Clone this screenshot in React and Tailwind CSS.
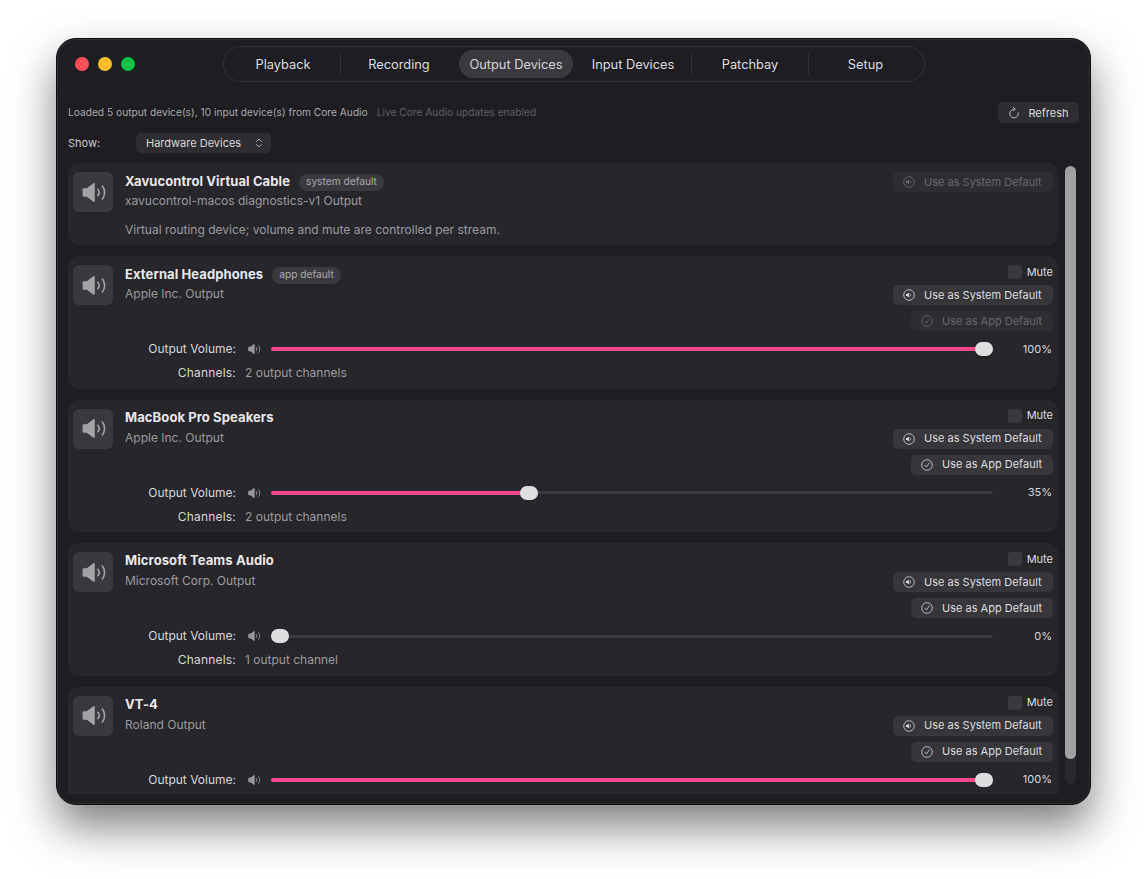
import { ChevronsUpDown } from 'lucide-react';

const TABS = [
  { label: 'Playback', width: 'w-[114px]' },
  { label: 'Recording', width: 'w-[116px]', sep: true },
  { label: 'Output Devices', width: 'w-[118px]', active: true },
  { label: 'Input Devices', width: 'w-[116px]' },
  { label: 'Patchbay', width: 'w-[116px]', sep: true },
  { label: 'Setup', width: 'w-[113px]', sep: true },
];

const DEVICES = [
  { name: 'External Headphones', badge: 'app default', sub: 'Apple Inc. Output', appDisabled: true, volume: 1, label: '100%', channels: '2 output channels' },
  { name: 'MacBook Pro Speakers', sub: 'Apple Inc. Output', volume: 0.3537, label: '35%', channels: '2 output channels' },
  { name: 'Microsoft Teams Audio', sub: 'Microsoft Corp. Output', volume: 0, label: '0%', channels: '1 output channel' },
  { name: 'VT-4', sub: 'Roland Output', volume: 1, label: '100%', channels: '2 output channels' },
];

function SpeakerIcon({ className }) {
  return (
    <svg viewBox="0 0 25 20" className={className} fill="none">
      <path d="M0 6.6C0 6 .4 5.6 1 5.6h3.4L11 .4c.8-.6 1.8-.2 1.8.9v17.4c0 1.1-1 1.500-1.800.9L4.400 14.400H1c-.6 0-1-.4-1-1z" fill="currentColor" />
      <path d="M16 6.600c1.700 2 1.700 4.800 0 6.800" stroke="currentColor" strokeWidth="1.700" strokeLinecap="round" />
      <path d="M20.800 3.200c3.100 3.900 3.100 9.700 0 13.600" stroke="currentColor" strokeWidth="1.700" strokeLinecap="round" />
    </svg>
  );
}

function CircleSpeaker({ className }) {
  return (
    <svg viewBox="0 0 12 12" className={className} fill="none">
      <circle cx="6" cy="6" r="5.300" stroke="currentColor" strokeWidth="0.800" />
      <path d="M2.900 5.100h1.200l2-1.600v5l-2-1.600H2.900z" fill="currentColor" />
      <path d="M7.300 4.700c.6.800.6 1.800 0 2.600" stroke="currentColor" strokeWidth="0.700" strokeLinecap="round" />
    </svg>
  );
}

function CircleCheck({ className }) {
  return (
    <svg viewBox="0 0 12 12" className={className} fill="none">
      <circle cx="6" cy="6" r="5.300" stroke="currentColor" strokeWidth="0.800" />
      <path d="M3.800 6.200l1.600 1.900 2.900-4.200" stroke="currentColor" strokeWidth="0.800" strokeLinecap="round" strokeLinejoin="round" />
    </svg>
  );
}

function RefreshIcon({ className }) {
  return (
    <svg viewBox="0 0 12 12" className={className} fill="none">
      <path d="M6.300 2.300A4.300 4.300 0 1 0 10.300 6.500" stroke="currentColor" strokeWidth="0.900" strokeLinecap="round" transform="rotate(-8 6 6)" />
      <path d="M5.300 .4 7.300 2.200 5.300 4" stroke="currentColor" strokeWidth="0.900" strokeLinecap="round" strokeLinejoin="round" />
    </svg>
  );
}

function ActionButton({ icon: Icon, label, disabled, width }) {
  return (
    <button className={`flex h-5 ${width} items-center justify-start rounded-[5px] pl-[10px] text-[11px] ${disabled ? 'bg-[#2e2d32] text-[#69686c]' : 'bg-[#37363b] text-[#dcdcde]'}`}>
      <Icon className={`mr-[9px] h-3 w-3 ${disabled ? 'text-[#69686c]' : 'text-[#d4d4d6]'}`} />
      {label}
    </button>
  );
}

function DeviceHead({ name, badge, sub }) {
  return (
    <div className="ml-3 pt-[2px]">
      <div className="flex h-[16px] items-center">
        <span className={`text-[13px] font-bold tracking-[0.1px] text-[#e8e8ea] ${badge ? '' : 'mt-[-2px]'}`}>{name}</span>
        {badge && <span className="ml-[9px] flex h-[17px] items-center rounded-full bg-[#3a393e] px-[7px] text-[10.2px] text-[#a9a9ab]">{badge}</span>}
      </div>
      <p className="mt-[3px] text-[12px] leading-4 text-[#9a9a9d]">{sub}</p>
    </div>
  );
}

function VolumeSlider({ volume }) {
  return (
    <div className="relative h-[14px] w-[722px]">
      <div className="absolute left-0 right-0 top-[5.5px] h-[3px] rounded-full bg-[#3a393e]" />
      <div className="absolute left-0 top-[5px] h-1 rounded-full bg-[#f5488f]" style={{ width: `${volume * 704 + 9}px` }} />
      <div className="absolute top-0 h-[14px] w-[18px] rounded-full bg-[#dedede]" style={{ left: `${volume * 704}px` }} />
    </div>
  );
}

function DeviceCard({ device }) {
  return (
    <div className="shrink-0 rounded-[10px] bg-[#27262b] pb-[7.5px] pl-[5px] pr-[5px] pt-[9px]">
      <div className="flex justify-between">
        <div className="flex">
          <div className="flex h-10 w-10 items-center justify-center rounded-md bg-[#3a393e]">
            <SpeakerIcon className="h-[19px] w-[25px] translate-x-[1px] text-[#a3a3a5]" />
          </div>
          <DeviceHead name={device.name} badge={device.badge} sub={device.sub} />
        </div>
        <div className="flex flex-col items-end gap-[6px]">
          <div className="flex h-[14px] items-center text-[11px] text-[#dcdcde]">
            <span className="mr-[5px] h-[14px] w-[14px] rounded-[3px] bg-[#3a393e]" />
            Mute
          </div>
          <ActionButton icon={CircleSpeaker} label="Use as System Default" width="w-[160px]" />
          <ActionButton icon={CircleCheck} label="Use as App Default" width="w-[142px]" disabled={device.appDisabled} />
        </div>
      </div>
      <div className="mt-[9px] flex h-[18px] items-center">
        <span className="w-[163px] text-right text-[12px] text-[#d6d6d8]">Output Volume:</span>
        <SpeakerIcon className="ml-3 h-[10px] w-[13px] text-[#9a9a9d]" />
        <div className="ml-[10px]"><VolumeSlider volume={device.volume} /></div>
        <span className="ml-auto pr-[1px] text-[11px] text-[#d6d6d8]">{device.label}</span>
      </div>
      <div className="mt-[7px] flex h-4 items-center text-[12px]">
        <span className="w-[163px] text-right tracking-[0.2px] text-[#d6d6d8]">Channels:</span>
        <span className="ml-[9px] text-[#9a9a9d]">{device.channels}</span>
      </div>
    </div>
  );
}

export default function App() {
  return (
    <div className="h-[879px] w-full overflow-hidden bg-white pl-[56px] pt-[38px] font-['Inter','Liberation_Sans',sans-serif]">
      <div className="flex h-[767px] w-[1035px] flex-col overflow-hidden rounded-[20px] border border-[#0b0b0c] bg-[#1e1d22] shadow-[0_22px_44px_rgba(0,0,0,0.5),inset_0_0_0_1px_rgba(255,255,255,0.08)]">
        {/* titlebar */}
        <div className="flex h-[52px] shrink-0 items-center border-b border-[#232227] pl-[18px]">
          <div className="mt-[-2px] flex w-[148px] gap-[9px]">
            <span className="h-[14px] w-[14px] rounded-full bg-[#ff4f56]" />
            <span className="h-[14px] w-[14px] rounded-full bg-[#fdbc2c]" />
            <span className="h-[14px] w-[14px] rounded-full bg-[#0ec148]" />
          </div>
          <div className="mt-[-1px] flex h-[36px] w-[702px] items-center rounded-full border border-[#333237] pl-[2px]">
            {TABS.map((tab) => (
              <div key={tab.label} className="flex items-center">
                {tab.sep && <span className="h-5 w-px bg-[#333237]" />}
                <div className={`${tab.width} flex h-7 items-center justify-center`}>
                  {tab.active ? (
                    <div className="mx-[2px] flex h-7 flex-1 items-center justify-center rounded-full bg-[#3a393e] pt-[2px] text-[12.8px] text-[#d4d4d6]">{tab.label}</div>
                  ) : (
                    <span className="mt-[2px] text-[12.8px] text-[#dcdcde]">{tab.label}</span>
                  )}
                </div>
              </div>
            ))}
          </div>
        </div>

        <div className="flex min-h-0 flex-1 flex-col px-[11px]">
          {/* status */}
          <div className="mt-[10px] flex h-[22px] shrink-0 items-center">
            <span className="mt-[2px] text-[10.2px] text-[#a9a9ab]">Loaded 5 output device(s), 10 input device(s) from Core Audio</span>
            <span className="ml-[9px] mt-[2px] text-[10.2px] text-[#5f5e62]">Live Core Audio updates enabled</span>
            <button className="ml-auto flex h-[21px] w-[81px] items-center justify-center rounded-[5px] bg-[#2e2d32] pt-[2px] text-[11px] text-[#dcdcde]">
              <RefreshIcon className="mr-2 h-3 w-3 text-[#c4c4c6]" />
              Refresh
            </button>
          </div>
          <div className="mt-[10px] flex h-5 shrink-0 items-center">
            <span className="w-[68px] text-[11px] text-[#c8c8ca]">Show:</span>
            <div className="flex h-5 w-[135px] items-center rounded-[5px] bg-[#2e2d32] pl-[10px] text-[11px] text-[#d6d6d8]">
              Hardware Devices
              <ChevronsUpDown className="ml-[12px] h-[12px] w-[12px] text-[#c4c4c6]" strokeWidth={1.6} />
            </div>
          </div>

          {/* list */}
          <div className="mb-[10px] mt-[10px] flex min-h-0 flex-1">
            <div className="flex w-[990px] flex-col gap-[11px] overflow-hidden">
              <div className="relative shrink-0 rounded-[10px] bg-[#27262b] pb-[7px] pl-[5px] pr-[5px] pt-[9px]">
                <div className="flex justify-between">
                  <div className="flex">
                    <div className="flex h-10 w-10 items-center justify-center rounded-md bg-[#3a393e]">
                      <SpeakerIcon className="h-[19px] w-[25px] translate-x-[1px] text-[#a3a3a5]" />
                    </div>
                    <DeviceHead name="Xavucontrol Virtual Cable" badge="system default" sub="xavucontrol-macos diagnostics-v1 Output" />
                  </div>
                  <ActionButton icon={CircleSpeaker} label="Use as System Default" width="w-[160px]" disabled />
                </div>
                <p className="ml-[52px] mt-[10px] text-[12px] leading-4 text-[#9a9a9d]">Virtual routing device; volume and mute are controlled per stream.</p>
              </div>
              {DEVICES.map((device) => (
                <DeviceCard key={device.name} device={device} />
              ))}
            </div>
            <div className="ml-[7px] mt-[3px] h-[618px] w-[11px] rounded-full bg-[#29282d]">
              <div className="h-[593px] w-[11px] rounded-full bg-[#a0a0a0]" />
            </div>
          </div>
        </div>
      </div>
    </div>
  );
}
